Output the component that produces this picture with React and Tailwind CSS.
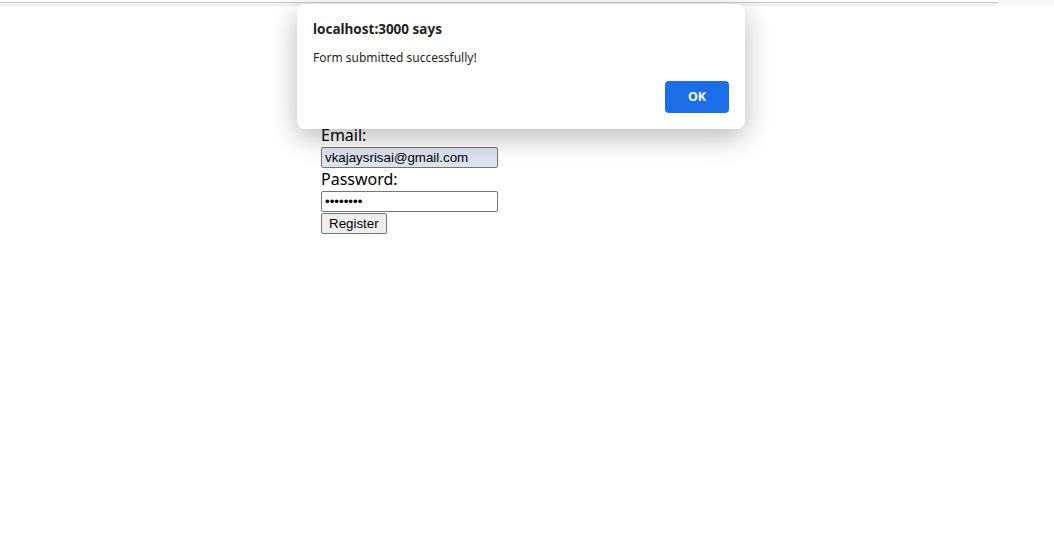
import { useState } from "react";

export default function App() {
  const [email, setEmail] = useState("vkajaysrisai@gmail.com");
  const [pwd, setPwd] = useState("password");

  return (
    <div className="relative min-h-[533px] bg-white overflow-hidden">
      {/* browser chrome edge */}
      <div className="flex h-[6px]">
        <div className="w-[998px] flex flex-col">
          <div className="h-[2px] bg-white" />
          <div className="h-[1px] bg-[#c9c9c9]" />
          <div className="h-[3px] bg-[#f1f1f1] rounded-br-[6px]" />
        </div>
        <div className="flex-1 bg-[#f6f6f6] h-[5px]" />
      </div>

      <form
        className="flex flex-col items-start pl-[321px] pt-[119px] font-['Noto_Sans','Open_Sans',sans-serif] text-[16px] text-black"
        onSubmit={(e) => e.preventDefault()}
      >
        <label className="leading-[21px]">Email:</label>
        <input
          type="email"
          value={email}
          onChange={(e) => setEmail(e.target.value)}
          className="w-[177px] h-[21px] mt-[1px] px-[3px] border border-[#767676] rounded-[2px] bg-[#dce4f0] font-['Liberation_Sans',Arial,sans-serif] text-[13.33px] leading-none outline-none"
        />
        <label className="leading-[21px] mt-[1px]">Password:</label>
        <input
          type="password"
          value={pwd}
          onChange={(e) => setPwd(e.target.value)}
          className="w-[177px] h-[21px] mt-[1px] px-[3px] border border-[#767676] rounded-[2px] bg-white font-['Liberation_Sans',Arial,sans-serif] text-[13.33px] leading-none outline-none"
        />
        <button
          type="submit"
          className="h-[21px] mt-[1px] px-[7px] border border-[#767676] rounded-[2px] bg-[#efefef] font-['Liberation_Sans',Arial,sans-serif] text-[13.33px] leading-none"
        >
          Register
        </button>
      </form>

      {/* alert dialog */}
      <div className="absolute left-[297px] top-[4px] w-[448px] h-[125px] bg-white rounded-[8px] shadow-[0_8px_28px_rgba(0,0,0,0.28)] px-[16px] pt-[15px] pb-[16px] flex flex-col font-['Noto_Sans','Open_Sans',sans-serif] text-[#1f1f1f]">
        <div className="text-[13.5px] font-bold leading-[20px]">localhost:3000 says</div>
        <div className="text-[12px] leading-[18px] mt-[10px]">Form submitted successfully!</div>
        <div className="flex justify-end mt-auto">
          <button className="w-[64px] h-[32px] rounded-[4px] bg-[#1b6ee8] text-white text-[12.5px] font-bold">
            OK
          </button>
        </div>
      </div>
    </div>
  );
}
